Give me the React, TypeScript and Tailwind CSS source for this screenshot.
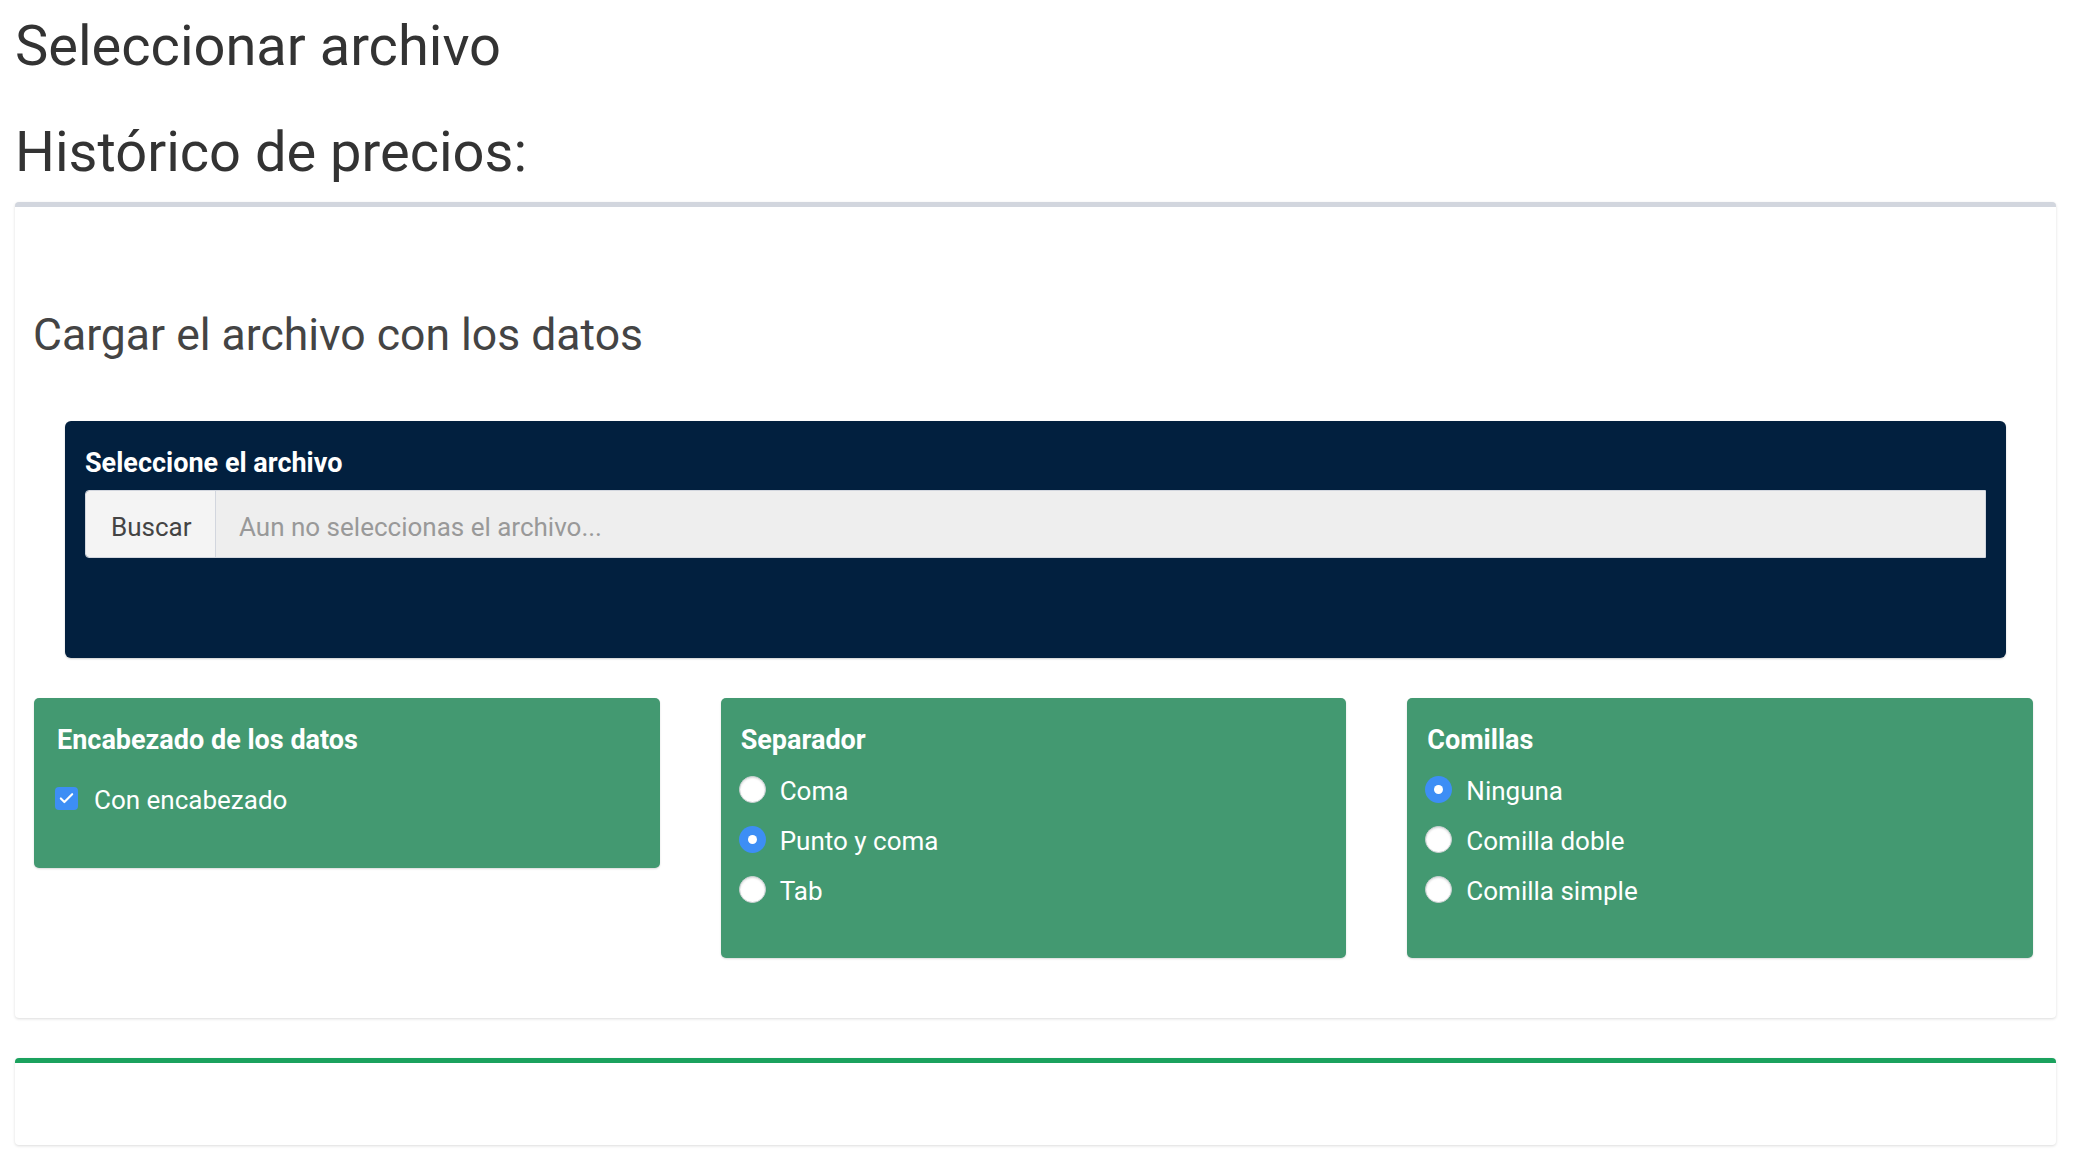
import { Check } from "lucide-react";

const font = "font-['Roboto','Liberation_Sans',sans-serif]";

function Radio({ label, checked }: { label: string; checked?: boolean }) {
  return (
    <div className="flex h-[50px] items-center">
      {checked ? (
        <span className="flex h-[27px] w-[27px] items-center justify-center rounded-full bg-[#3d8ef5]">
          <span className="h-[9px] w-[9px] rounded-full bg-white" />
        </span>
      ) : (
        <span className="h-[27px] w-[27px] rounded-full border border-[#c9cfd1] bg-white shadow-[inset_0_1px_2px_rgba(0,0,0,0.15)]" />
      )}
      <span className="ml-[14px] pt-[4px] text-[26px] leading-[1.2] text-white">{label}</span>
    </div>
  );
}

function OptionBox({ title, children, tall }: { title: string; children: React.ReactNode; tall?: boolean }) {
  return (
    <div
      className={`rounded-[5px] bg-[#439971] shadow-[0_1px_2px_rgba(0,0,0,0.15)] ${
        tall ? "h-[260px] pl-[18px]" : "h-[170px] pl-[21px]"
      } pt-[27px]`}
    >
      <div className="pl-[2px] text-[27px] font-bold leading-[1.15] text-white">{title}</div>
      {children}
    </div>
  );
}

export default function App() {
  return (
    <div className={`${font} min-h-screen bg-white pl-[15px] pr-[17px] pt-[16px] pb-[28px] text-[#333]`}>
      <h1 className="text-[56px] leading-[1.1] font-normal">Seleccionar archivo</h1>
      <h2 className="mt-[43px] text-[56px] leading-[1.14] font-normal">Histórico de precios:</h2>

      <div className="mt-[18px] rounded-[4px] border-t-[5px] border-[#d2d6de] bg-white pt-[104px] pb-[60px] shadow-[0_1px_3px_rgba(0,0,0,0.14)]">
        <div className="pl-[18px] text-[44.5px] leading-[1.1] text-[#444]">Cargar el archivo con los datos</div>

        <div className="mx-[50px] mt-[61px] rounded-[6px] bg-[#02203f] px-[20px] pt-[27px] pb-[100px] shadow-[0_1px_2px_rgba(0,0,0,0.2)]">
          <div className="text-[27px] font-bold leading-[1.15] text-white">Seleccione el archivo</div>
          <div className="mt-[11px] flex h-[68px] overflow-hidden rounded-l-[4px] border border-[#d2d6de]">
            <div className="flex w-[130px] items-center border-r border-[#d2d6de] bg-[#f4f4f4] pl-[25px] pt-[7px] text-[26px] text-[#444]">
              Buscar
            </div>
            <div className="flex flex-1 items-center bg-[#eeeeee] pl-[23px] pt-[7px] text-[26px] text-[#999]">
              Aun no seleccionas el archivo...
            </div>
          </div>
        </div>

        <div className="mt-[40px] ml-[19px] mr-[23px] grid grid-cols-3 items-start gap-[61px]">
          <OptionBox title="Encabezado de los datos">
            <div className="mt-[27px] flex h-[31px] items-center">
              <span className="flex h-[23px] w-[23px] items-center justify-center rounded-[4px] bg-[#3d8ef5]">
                <Check className="h-[17px] w-[17px] text-white" strokeWidth={3} />
              </span>
              <span className="ml-[16px] pt-[4px] text-[26px] leading-[1.2] text-white">Con encabezado</span>
            </div>
          </OptionBox>
          <OptionBox title="Separador" tall>
            <div className="mt-[8px]">
              <Radio label="Coma" />
              <Radio label="Punto y coma" checked />
              <Radio label="Tab" />
            </div>
          </OptionBox>
          <OptionBox title="Comillas" tall>
            <div className="mt-[8px]">
              <Radio label="Ninguna" checked />
              <Radio label="Comilla doble" />
              <Radio label="Comilla simple" />
            </div>
          </OptionBox>
        </div>
      </div>

      <div className="mt-[40px] h-[87px] rounded-[4px] border-t-[5px] border-[#1ba25e] bg-white shadow-[0_1px_3px_rgba(0,0,0,0.14)]" />
    </div>
  );
}
